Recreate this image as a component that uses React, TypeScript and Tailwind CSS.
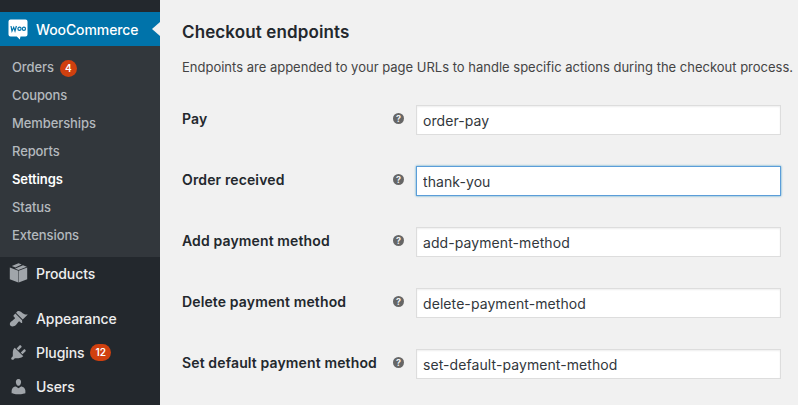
const subItems = ['Orders', 'Coupons', 'Memberships', 'Reports', 'Settings', 'Status', 'Extensions'];

const endpoints = [
  { label: 'Pay', value: 'order-pay' },
  { label: 'Order received', value: 'thank-you', focused: true },
  { label: 'Add payment method', value: 'add-payment-method' },
  { label: 'Delete payment method', value: 'delete-payment-method' },
  { label: 'Set default payment method', value: 'set-default-payment-method' },
];

function Badge({ count }: { count: number }) {
  return (
    <span className="ml-[6px] flex h-[17px] min-w-[17px] items-center justify-center rounded-full bg-[#d0400f] px-[5px] text-[10px] font-semibold text-white">
      {count}
    </span>
  );
}

function HelpIcon() {
  return (
    <span className="flex h-[11px] w-[11px] items-center justify-center rounded-full bg-[#666] text-[9px] leading-none font-bold text-[#f1f1f1]">
      ?
    </span>
  );
}

function WooLogo() {
  return (
    <svg width="20" height="21" viewBox="0 0 20 21" className="shrink-0">
      <path d="M2.5 0.5h15a2 2 0 0 1 2 2v13a2 2 0 0 1-2 2h-5l-.7 3-3-3h-6.300a2 2 0 0 1-2-2v-13a2 2 0 0 1 2-2z" fill="#fff" />
      <path d="M3 7l1 5 1.700-3.700 1.300 3.700 1.400-5" fill="none" stroke="#0073aa" strokeWidth="1.200" />
      <circle cx="11.500" cy="9.700" r="1.600" fill="none" stroke="#0073aa" strokeWidth="1.200" />
      <circle cx="15.900" cy="9.700" r="1.600" fill="none" stroke="#0073aa" strokeWidth="1.200" />
    </svg>
  );
}

function BoxIcon() {
  return (
    <svg width="19" height="20" viewBox="0 0 19 20" fill="#a0a5aa">
      <path d="M9.500 0.300l3.200 1.300-6.400 2.900-3.500-1.400z" />
      <path d="M14 2.200l3.800 1.500-8.300 3.300-3.200-1.300v-.1z" />
      <path d="M0.800 4.500l8.500 3.200v11.900l-8.500-3.400z" />
      <path d="M9.700 7.700l8.500-3.200v11.700l-8.500 3.400z" />
    </svg>
  );
}

function BrushIcon() {
  return (
    <svg width="19" height="19" viewBox="0 0 20 20" fill="#a0a5aa">
      <path d="M14.480 11.060L7.410 3.990l1.500-1.500c.5-.56 2.300-.47 3.510.32 1.210.8 1.430 1.280 2.910 2.100 1.180.64 2.450 1.260 4.450.85zm-.71.71L6.700 4.700 4.930 6.470c-.39.39-.39 1.020 0 1.410l1.060 1.060c.39.39.39 1.030 0 1.420-.6.6-1.430 1.110-2.210 1.690-.35.26-.7.53-1.010.84C1.430 13.260 0 16 1.700 17.700c1.690 1.700 4.450.26 5.810-1.100.31-.31.58-.66.84-1.010.58-.78 1.090-1.610 1.690-2.210.39-.39 1.020-.39 1.410 0l1.060 1.060c.39.39 1.020.39 1.410 0z" />
    </svg>
  );
}

function PluginIcon() {
  return (
    <svg width="19" height="19" viewBox="0 0 20 20" fill="#a0a5aa">
      <path d="M13.110 4.360L9.870 7.600 8 5.730l3.240-3.240c.35-.34 1.050-.2 1.560.32.520.51.660 1.210.310 1.550zm-8 1.770l.91-1.120 9.010 9.010-1.190.84c-.71.71-2.630 1.160-3.820 1.160H6.140L4.900 17.260c-.59.59-1.540.59-2.120 0-.59-.58-.59-1.530 0-2.120l1.240-1.240v-3.880c0-1.130.4-3.190 1.090-3.890zm7.260 3.970l3.240-3.240c.34-.35 1.040-.21 1.550.31.520.51.660 1.210.310 1.550l-3.240 3.250z" />
    </svg>
  );
}

function UserIcon() {
  return (
    <svg width="19" height="19" viewBox="0 0 20 20" fill="#a0a5aa">
      <path d="M10 9.250c-2.270 0-2.730-3.440-2.730-3.440C7 4.020 7.820 2 9.970 2c2.160 0 2.980 2.020 2.710 3.810 0 0-.41 3.440-2.680 3.440zm0 2.570L12.720 10c2.390 0 4.520 2.330 4.520 4.530v2.490s-3.650 1.130-7.240 1.130c-3.650 0-7.240-1.130-7.240-1.130v-2.490c0-2.250 1.940-4.480 4.470-4.480z" />
    </svg>
  );
}

function MenuRow({ icon, label, badge, className }: { icon: React.ReactNode; label: string; badge?: number; className: string }) {
  return (
    <div className={`flex items-center ${className}`}>
      <div className="flex w-[36px] justify-center">{icon}</div>
      <span className="text-[14px] font-medium tracking-[-0.1px] text-[#eee]">{label}</span>
      {badge ? <Badge count={badge} /> : null}
    </div>
  );
}

export default function App() {
  return (
    <div className="flex h-[405px] w-[798px] overflow-hidden bg-[#f1f1f1] font-['Inter','Liberation_Sans',sans-serif]">
      <aside className="flex h-full w-[160px] shrink-0 flex-col bg-[#23282d]">
        <div className="h-[12px] shrink-0" />
        <div className="relative flex h-[34px] shrink-0 items-center bg-[#0073aa] pl-[8px]">
          <WooLogo />
          <span className="ml-[8px] text-[14px] font-medium tracking-[-0.1px] text-white">WooCommerce</span>
          <span className="absolute right-0 top-[10px] h-0 w-0 border-y-[7px] border-r-[8px] border-y-transparent border-r-[#f1f1f1]" />
        </div>
        <div className="flex h-[211px] shrink-0 flex-col bg-[#32373c] pt-[8px]">
          {subItems.map((item) => (
            <div
              key={item}
              className={`flex h-[28px] shrink-0 items-center pl-[12px] text-[13px] tracking-[-0.1px] ${item === 'Settings' ? 'font-semibold text-white' : 'font-medium text-[#b4b9be]'}`}
            >
              {item}
              {item === 'Orders' ? <Badge count={4} /> : null}
            </div>
          ))}
        </div>
        <MenuRow className="h-[32px] shrink-0" icon={<BoxIcon />} label="Products" />
        <MenuRow className="mt-[12px] h-[34px] shrink-0" icon={<BrushIcon />} label="Appearance" />
        <MenuRow className="h-[34px] shrink-0" icon={<PluginIcon />} label="Plugins" badge={12} />
        <MenuRow className="h-[34px] shrink-0" icon={<UserIcon />} label="Users" />
      </aside>
      <main className="min-w-0 flex-1 pl-[22px]">
        <h2 className="mt-[21px] text-[17px] leading-[22px] font-semibold tracking-[0.12px] whitespace-nowrap text-[#23282d]">Checkout endpoints</h2>
        <p className="mt-[14px] text-[13px] leading-[20px] whitespace-nowrap text-[#444]">
          Endpoints are appended to your page URLs to handle specific actions during the checkout process.
        </p>
        <div className="mt-[28px] flex flex-col gap-[31px]">
          {endpoints.map((row) => (
            <div key={row.label} className="flex h-[30px] items-center">
              <label className="w-[211px] shrink-0 pb-[3px] text-[14px] font-semibold tracking-[0.13px] whitespace-nowrap text-[#23282d]">{row.label}</label>
              <div className="w-[23px] shrink-0 pb-[4px]">
                <HelpIcon />
              </div>
              <input
                readOnly
                value={row.value}
                className={`h-[30px] w-[365px] border bg-white px-[6px] pt-[1px] text-[14px] tracking-[0.08px] text-[#32373c] outline-none ${row.focused ? 'border-[#5b9dd9] shadow-[0_0_2px_rgba(30,140,190,0.8)]' : 'border-[#ddd] shadow-[inset_0_1px_2px_rgba(0,0,0,0.07)]'}`}
              />
            </div>
          ))}
        </div>
      </main>
    </div>
  );
}
